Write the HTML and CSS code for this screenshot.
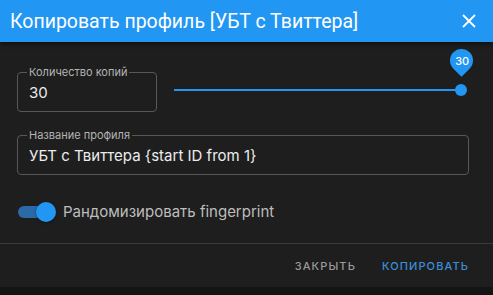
FILE: index.html
```html
<!DOCTYPE html>
<html lang="ru">
<head>
<meta charset="utf-8">
<title>Копировать профиль</title>
<link rel="stylesheet" href="styles.css">
</head>
<body>
<div class="dialog">
  <header class="header">
    <h1 class="title">Копировать профиль [УБТ с Твиттера]</h1>
    <svg class="close" viewBox="0 0 14 14" width="14" height="14" aria-label="Закрыть">
      <path d="M1 1 L13 13 M13 1 L1 13" stroke="#fff" stroke-width="1.8" fill="none"/>
    </svg>
  </header>
  <main class="content">
    <div class="row">
      <fieldset class="field field-count">
        <legend class="legend">Количество копий</legend>
        <div class="value">30</div>
      </fieldset>
      <div class="slider">
        <div class="thumb"></div>
        <div class="bubble"><span class="bubble-text">30</span></div>
      </div>
    </div>
    <fieldset class="field field-name">
      <legend class="legend">Название профиля</legend>
      <div class="value">УБТ с Твиттера {start ID from 1}</div>
    </fieldset>
    <div class="switch-row">
      <div class="switch"><div class="switch-thumb"></div></div>
      <span class="switch-label">Рандомизировать fingerprint</span>
    </div>
  </main>
  <footer class="footer">
    <button class="btn btn-close">Закрыть</button>
    <button class="btn btn-copy">Копировать</button>
  </footer>
</div>
</body>
</html>
```
FILE: styles.css
```css
html, body {
  margin: 0;
  padding: 0;
  background: #141414;
  font-family: "Inter", "Noto Sans", sans-serif;
}

.dialog {
  width: 493px;
  height: 287px;
  background: #1e1e1e;
  display: flex;
  flex-direction: column;
}

.header {
  height: 42px;
  flex: none;
  background: #2196f3;
  display: flex;
  align-items: center;
  justify-content: space-between;
  padding: 0 17px 0 10px;
  box-shadow: 0 2px 4px rgba(0, 0, 0, 0.5);
  position: relative;
  z-index: 1;
}

.title {
  margin: 0;
  font-family: "Roboto", "Noto Sans", sans-serif;
  font-weight: 400;
  font-size: 19.5px;
  color: #fff;
  letter-spacing: 0;
}

.close {
  display: block;
}

.content {
  flex: 1;
  padding: 24px 24px 0 17px;
  display: flex;
  flex-direction: column;
}

.row {
  display: flex;
  align-items: center;
}

.field {
  margin: 0;
  border: 1px solid #585858;
  border-radius: 4px;
  padding: 0 10px 8px 9px;
  min-width: 0;
}

.field-count {
  width: 140px;
  box-sizing: border-box;
  flex: none;
}

.field-name {
  margin-top: 17px;
}

.legend {
  padding: 0 2px;
  font-size: 11px;
  line-height: 12px;
  color: #b4b4b4;
}

.value {
  margin-top: 5px;
  padding-left: 2px;
  font-size: 15px;
  line-height: 20px;
  color: #ececec;
}

.slider {
  flex: 1;
  height: 2px;
  background: #2196f3;
  margin: 1px 8px 0 17px;
  position: relative;
}

.thumb {
  position: absolute;
  right: -6px;
  top: -5px;
  width: 12px;
  height: 12px;
  border-radius: 50%;
  background: #2196f3;
}

.bubble {
  position: absolute;
  right: -11.5px;
  top: -40px;
  width: 23px;
  height: 23px;
  border-radius: 50% 50% 50% 0;
  background: #2196f3;
  transform: rotate(-45deg);
  display: flex;
  align-items: center;
  justify-content: center;
}

.bubble-text {
  transform: rotate(45deg);
  color: #fff;
  font-size: 11px;
  font-weight: 500;
}

.switch-row {
  display: flex;
  align-items: center;
  margin-top: 27px;
  padding-left: 1px;
}

.switch {
  width: 34px;
  height: 12px;
  border-radius: 7px;
  background: #2a6aa8;
  position: relative;
  flex: none;
}

.switch-thumb {
  position: absolute;
  right: -4px;
  top: -4px;
  width: 20px;
  height: 20px;
  border-radius: 50%;
  background: #2196f3;
  box-shadow: 0 1px 3px rgba(0, 0, 0, 0.4);
}

.switch-label {
  margin-left: 11px;
  font-size: 15px;
  color: #bdbdbd;
}

.footer {
  flex: none;
  height: 43px;
  border-top: 1px solid #3a3a3a;
  display: flex;
  align-items: center;
  justify-content: flex-end;
  gap: 26px;
  padding-right: 24px;
}

.btn {
  background: none;
  border: none;
  padding: 0;
  font-family: "Inter", "Noto Sans", sans-serif;
  font-size: 11px;
  font-weight: 500;
  letter-spacing: 1.1px;
  text-transform: uppercase;
  cursor: pointer;
}

.btn-close {
  color: #9a9a9a;
}

.btn-copy {
  color: #3a8fd8;
}
```
